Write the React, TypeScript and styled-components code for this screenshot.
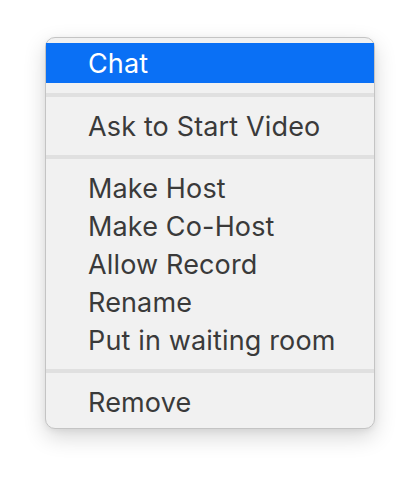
import React from "react";
import styled, { createGlobalStyle } from "styled-components";

const Global = createGlobalStyle`
  html, body { margin: 0; padding: 0; background: #ffffff; }
  body { font-family: Inter, "Noto Sans", sans-serif; }
`;

const Page = styled.div`
  padding: 37px 45px;
`;

const Menu = styled.div`
  width: 328px;
  background: #f1f1f1;
  border: 1px solid #c4c4c4;
  border-radius: 10px;
  padding: 5px 0 7px;
  box-shadow: 0 8px 22px rgba(0, 0, 0, 0.16), 0 2px 6px rgba(0, 0, 0, 0.06);
  display: flex;
  flex-direction: column;
`;

const Item = styled.div<{ $active?: boolean }>`
  height: ${(p) => (p.$active ? 40 : 38)}px;
  display: flex;
  align-items: center;
  padding-left: 42px;
  font-size: 27px;
  letter-spacing: 0.15px;
  color: ${(p) => (p.$active ? "#ffffff" : "#3a3a3a")};
  background: ${(p) => (p.$active ? "#0a70f5" : "transparent")};
`;

const Separator = styled.div`
  height: 4px;
  margin: 10px 0;
  background: #e0e0e0;
`;

const groups: string[][] = [
  ["Chat"],
  ["Ask to Start Video"],
  ["Make Host", "Make Co-Host", "Allow Record", "Rename", "Put in waiting room"],
  ["Remove"],
];

export default function App() {
  return (
    <>
      <Global />
      <Page>
        <Menu>
          {groups.map((g, gi) => (
            <React.Fragment key={gi}>
              {gi > 0 && <Separator />}
              {g.map((label) => (
                <Item key={label} $active={label === "Chat"}>
                  {label}
                </Item>
              ))}
            </React.Fragment>
          ))}
        </Menu>
      </Page>
    </>
  );
}
